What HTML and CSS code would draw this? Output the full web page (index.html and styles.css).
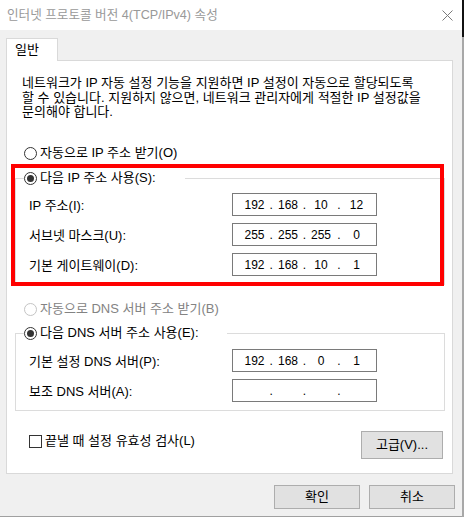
FILE: index.html
```html
<!DOCTYPE html>
<html lang="ko">
<head>
<meta charset="utf-8">
<title>인터넷 프로토콜 버전 4(TCP/IPv4) 속성</title>
<link rel="stylesheet" href="styles.css">
</head>
<body>
<div class="window">
  <div class="titlebar">
    <span class="title">인터넷 프로토콜 버전 4(TCP/IPv4) 속성</span>
    <svg class="close" width="11" height="11" viewBox="0 0 11 11"><path d="M0.5 0.5 L10.5 10.5 M10.5 0.5 L0.5 10.5" stroke="#7a7a7a" stroke-width="1" fill="none"/></svg>
  </div>
  <div class="tabs"><div class="tab">일반</div></div>
  <div class="panel">
    <p class="intro">네트워크가 IP 자동 설정 기능을 지원하면 IP 설정이 자동으로 할당되도록<br>할 수 있습니다. 지원하지 않으면, 네트워크 관리자에게 적절한 IP 설정값을<br>문의해야 합니다.</p>

    <div class="radio radio-auto-ip"><span class="circle"></span><span>자동으로 IP 주소 받기(O)</span></div>

    <div class="group group-ip">
      <div class="radio legend"><span class="circle on"></span><span>다음 IP 주소 사용(S):</span></div>
      <div class="rows">
        <div class="row"><span class="label">IP 주소(I):</span>
          <div class="ipbox"><span></span><span>192</span><span>.</span><span>168</span><span>.</span><span>10</span><span>.</span><span>12</span></div></div>
        <div class="row"><span class="label">서브넷 마스크(U):</span>
          <div class="ipbox"><span></span><span>255</span><span>.</span><span>255</span><span>.</span><span>255</span><span>.</span><span>0</span></div></div>
        <div class="row"><span class="label">기본 게이트웨이(D):</span>
          <div class="ipbox"><span></span><span>192</span><span>.</span><span>168</span><span>.</span><span>10</span><span>.</span><span>1</span></div></div>
      </div>
    </div>

    <div class="radio radio-auto-dns disabled"><span class="circle"></span><span>자동으로 DNS 서버 주소 받기(B)</span></div>

    <div class="group group-dns">
      <div class="radio legend"><span class="circle on"></span><span>다음 DNS 서버 주소 사용(E):</span></div>
      <div class="rows">
        <div class="row"><span class="label">기본 설정 DNS 서버(P):</span>
          <div class="ipbox"><span></span><span>192</span><span>.</span><span>168</span><span>.</span><span>0</span><span>.</span><span>1</span></div></div>
        <div class="row"><span class="label">보조 DNS 서버(A):</span>
          <div class="ipbox"><span></span><span></span><span>.</span><span></span><span>.</span><span></span><span>.</span><span></span></div></div>
      </div>
    </div>

    <div class="options">
      <div class="check-label"><span class="checkbox"></span><span>끝낼 때 설정 유효성 검사(L)</span></div>
      <button class="btn btn-adv">고급(V)...</button>
    </div>
  </div>
  <div class="footer">
    <button class="btn btn-main">확인</button>
    <button class="btn btn-main">취소</button>
  </div>
</div>
<div class="edge"></div>
</body>
</html>
```
FILE: styles.css
```css
html, body {
  margin: 0;
  padding: 0;
}
body {
  width: 464px;
  height: 517px;
  overflow: hidden;
  display: flex;
  font-family: "Liberation Sans", "Noto Sans CJK KR", sans-serif;
  font-size: 13px;
  color: #000;
  background: #f0f0f0;
}
.window {
  width: 462px;
  height: 517px;
  box-sizing: border-box;
  border-bottom: 1px solid #a0a0a0;
  background: #f0f0f0;
  display: flex;
  flex-direction: column;
}
.edge {
  width: 2px;
  height: 517px;
  background: linear-gradient(#111111 0 37px, #a8a8a8 37px);
}

/* title bar */
.titlebar {
  flex: none;
  height: 30px;
  box-sizing: border-box;
  background: #fff;
  display: flex;
  align-items: center;
  justify-content: space-between;
  padding: 0 9px 0 7px;
}
.title {
  color: #999;
  font-size: 12.6px;
  line-height: 16px;
  margin-bottom: 1px;
}
.close {
  display: block;
}

/* tab */
.tabs {
  flex: none;
  margin-top: 8px;
  padding-left: 6px;
  display: flex;
}
.tab {
  position: relative;
  z-index: 1;
  width: 52px;
  height: 23px;
  box-sizing: border-box;
  border: 1px solid #d9d9d9;
  border-bottom: none;
  background: #fff;
  margin-bottom: -1px;
  padding-left: 8px;
  line-height: 22px;
}

/* panel */
.panel {
  flex: none;
  margin-left: 6px;
  width: 447px;
  box-sizing: border-box;
  border: 1px solid #d9d9d9;
  background: #fff;
  padding: 15px 7px 14px 8px;
}
.intro {
  margin: 0 0 0 7px;
  line-height: 14.5px;
  white-space: nowrap;
}

/* radio */
.radio {
  display: flex;
  align-items: center;
  gap: 3px;
  height: 16px;
  line-height: 16px;
  white-space: nowrap;
}
.circle {
  flex: none;
  width: 13px;
  height: 13px;
  box-sizing: border-box;
  border: 1px solid #333;
  border-radius: 50%;
  background: #fff;
  display: flex;
  align-items: center;
  justify-content: center;
}
.circle.on::after {
  content: "";
  width: 7px;
  height: 7px;
  border-radius: 50%;
  background: #333;
}
.radio-auto-ip {
  margin: 25.5px 0 0 9px;
}
.radio-auto-dns {
  margin: 16px 0 0 9px;
}
.disabled {
  color: #838383;
}
.disabled .circle {
  border-color: #c4c4c4;
}

/* group boxes */
.group {
  border: 1px solid #dcdcdc;
  padding-bottom: 8px;
}
.group-ip {
  position: relative;
  margin-top: 17px;
}
.group-ip::after {
  content: "";
  position: absolute;
  left: -5px;
  top: -15px;
  right: 0;
  bottom: -2px;
  border: 4px solid #ff0000;
  pointer-events: none;
}
.group-dns {
  margin-top: 16px;
}
.legend {
  margin: -9px 0 0 8px;
  width: 161px;
  background: #fff;
}
.group-dns .legend {
  width: 203px;
}
.rows {
  margin-top: 7px;
  padding-left: 13px;
  display: flex;
  flex-direction: column;
  gap: 7px;
}
.group-dns .rows {
  margin-top: 8px;
}
.row {
  display: flex;
  align-items: center;
  height: 23px;
}
.label {
  width: 203px;
  flex: none;
  white-space: nowrap;
}
.ipbox {
  width: 145px;
  height: 23px;
  box-sizing: border-box;
  border: 1px solid #7a7a7a;
  display: grid;
  grid-template-columns: 8.5px 26px 7.5px 26px 7px 26px 10px 25px;
  align-items: center;
  font-size: 12px;
  line-height: 16px;
  text-align: center;
}

/* options */
.options {
  margin-top: 20px;
  padding: 0 2px 0 14px;
  display: flex;
  justify-content: space-between;
  align-items: flex-start;
}
.check-label {
  margin-top: 2px;
  display: flex;
  align-items: center;
  gap: 3px;
  line-height: 16px;
}
.checkbox {
  flex: none;
  width: 13px;
  height: 13px;
  box-sizing: border-box;
  border: 1px solid #333;
  background: #fff;
}

/* buttons */
.btn {
  font-family: inherit;
  font-size: 13px;
  color: #000;
  background: #e1e1e1;
  border: 1px solid #adadad;
  padding: 0;
  margin: 0;
  line-height: 16px;
}
.btn-adv {
  width: 82px;
  height: 28px;
}
.footer {
  flex: none;
  margin-top: 11px;
  padding-right: 7px;
  display: flex;
  justify-content: flex-end;
  gap: 9px;
}
.btn-main {
  width: 86px;
  height: 24px;
}
```
